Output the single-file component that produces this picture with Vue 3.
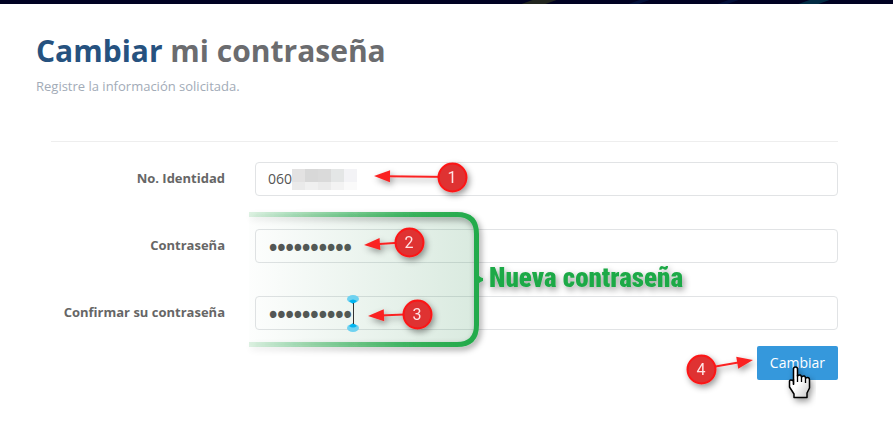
<script setup>

import { ref } from 'vue';

const identidad = ref('060');
const contrasena = ref('xxxxxxxxxx');
const confirmacion = ref('xxxxxxxxxx');

// pasos numerados: circulo (x, y) y punta de la flecha
const pasos = [
    { n: 1, x: 452, y: 177, px: 374, py: 176 },
    { n: 2, x: 409, y: 242, px: 364, py: 245 },
    { n: 3, x: 417, y: 314, px: 368, py: 316 },
    { n: 4, x: 701, y: 369, px: 753, py: 360 }
];

const flecha = (p) => {
    const angulo = Math.atan2(p.py - p.y, p.px - p.x) * 180 / Math.PI;
    return `translate(${p.px} ${p.py}) rotate(${angulo})`;
};

const largo = (p) => Math.hypot(p.px - p.x, p.py - p.y);

// celdas que ocultan el resto del numero
const celdas = [
    '#e3e2e2', '#d8d8d8', '#dadada', '#e4e6e6', '#f3f3f6',
    '#eaeaea', '#f0f0f0', '#ebebeb', '#f3f3f3', '#fafafa'
];

</script>

<template>

    <div class="pagina">

        <div class="barra">
            <i class="destello amarillo"></i>
            <i class="destello azul"></i>
            <i class="destello azul dos"></i>
            <i class="destello cian"></i>
        </div>

        <header class="encabezado">
            <h1><span>Cambiar</span> mi contraseña</h1>
            <p>Registre la información solicitada.</p>
        </header>

        <form class="formulario" @submit.prevent>

            <div class="fila">
                <label for="identidad">No. Identidad</label>
                <input id="identidad" v-model="identidad" type="text">
            </div>

            <div class="fila">
                <label for="contrasena">Contraseña</label>
                <input id="contrasena" v-model="contrasena" type="password">
            </div>

            <div class="fila">
                <label for="confirmacion">Confirmar su contraseña</label>
                <input id="confirmacion" v-model="confirmacion" type="password">
            </div>

            <div class="acciones">
                <button type="submit">Cambiar</button>
            </div>

        </form>

        <!-- anotaciones sobre el formulario -->
        <svg class="notas" width="893" height="427" viewBox="0 0 893 427">
            <defs>
                <linearGradient id="trazo" gradientUnits="userSpaceOnUse" x1="249" y1="0" x2="479" y2="0">
                    <stop offset="0" stop-color="#22aa4a" stop-opacity="0.15" />
                    <stop offset="0.75" stop-color="#22aa4a" stop-opacity="0.9" />
                    <stop offset="1" stop-color="#22aa4a" />
                </linearGradient>
                <linearGradient id="fondo">
                    <stop offset="0" stop-color="#2d8a4e" stop-opacity="0.01" />
                    <stop offset="1" stop-color="#2d8a4e" stop-opacity="0.18" />
                </linearGradient>
                <linearGradient id="mano" x1="0" y1="0" x2="1" y2="1">
                    <stop offset="0.5" stop-color="#fff" />
                    <stop offset="1" stop-color="#c4c4c4" />
                </linearGradient>
                <filter id="sombra" x="-30%" y="-30%" width="160%" height="180%">
                    <feDropShadow dx="2" dy="3" stdDeviation="3" flood-color="#000" flood-opacity="0.4" />
                </filter>
            </defs>

            <g>
                <rect v-for="(color, i) in celdas" :key="i" :x="292 + (i % 5) * 13" :y="i < 5 ? 169 : 182"
                    width="13" :height="i < 5 ? 13 : 8" :fill="color" />
            </g>

            <path d="M249 214H457Q477 214 477 234V325Q477 345 457 345H249Z" fill="url(#fondo)" />
            <g filter="url(#sombra)">
                <path d="M249 214.500H457Q476.500 214.500 476.500 234V325Q476.500 344.500 457 344.500H249"
                    fill="none" stroke="url(#trazo)" stroke-width="5" />
                <path d="M478 274Q479 277 483 278V281Q479 282 478 285Z" fill="#22aa4a" />
            </g>

            <g filter="url(#sombra)">
                <text class="titulo-nota" x="489" y="287">Nueva contraseña</text>
            </g>

            <g v-for="p in pasos" :key="p.n" filter="url(#sombra)">
                <g :transform="flecha(p)">
                    <path :d="`M-12 0H${-largo(p)}`" stroke="#fa2424" stroke-width="2" />
                    <path d="M0 0L-16 -6V6Z" fill="#fa2424" />
                </g>
                <circle :cx="p.x + 0.5" :cy="p.y + 0.5" r="14" fill="#df3033" stroke="#fc1414" stroke-width="2" />
                <text class="numero" :x="p.x" :y="p.y + 6">{{ p.n }}</text>
            </g>

            <!-- cursor de texto -->
            <g>
                <ellipse cx="353" cy="299" rx="6" ry="4" fill="#6fd2f0" />
                <ellipse cx="353" cy="328" rx="6" ry="4" fill="#6fd2f0" />
                <path d="M349 301Q353 298 357 301L353 304ZM349 326L353 323L357 326Q353 329 349 326Z" fill="#00b5f0" />
                <path d="M353.500 303V324" stroke="#333" />
            </g>

            <!-- puntero -->
            <path filter="url(#sombra)"
                d="M793.500 384V369Q793.500 367 795.500 367Q797.500 367 797.500 369V376Q801 373.500 801.500 377Q805 374.500 805.500 378Q809.500 376.500 809.500 380V388L807 393V397.500H794V394L789.500 387V381Q790 379 793.500 381Z"
                fill="url(#mano)" stroke="#000" stroke-width="1.500" stroke-linejoin="round" />
            <path d="M793.500 379V385M797.500 375V382M801.500 376V382M805.500 378V383" stroke="#000" stroke-width="1.300" />
        </svg>

    </div>

</template>

<style>
body {
    margin: 0;
    background: #fff;
}
</style>

<style scoped>
.pagina {
    position: relative;
    overflow: hidden;
    padding-bottom: 47px;
    font-family: "Open Sans", sans-serif;
    color: #666;
}

/* BARRA SUPERIOR */

.barra {
    position: relative;
    height: 4px;
    overflow: hidden;
    background: #000222;
}

.destello {
    position: absolute;
    left: 59%;
    width: 24px;
    height: 4px;
    transform: skewX(-70deg);
}

.amarillo {
    background: #22261f;
}

.azul {
    left: 71%;
    width: 10px;
    background: #03103a;
}

.azul.dos {
    left: 81%;
}

.cian {
    left: 90%;
    width: 20px;
    background: #022c44;
}

/* ENCABEZADO */

.encabezado {
    padding: 26px 36px 0;
}

.encabezado h1 {
    margin: 0;
    font-size: 30px;
    line-height: 42px;
    font-weight: 700;
    color: #6b6c6f;
}

.encabezado h1 span {
    color: #26527f;
}

.encabezado p {
    margin: 4px 0 0;
    font-size: 13px;
    line-height: 20px;
    color: #a2abb7;
}

/* FORMULARIO */

.formulario {
    display: flex;
    flex-direction: column;
    gap: 33px;
    margin: 45px 55px 0 51px;
    padding-top: 20px;
    border-top: 1px solid #eee;
}

.fila {
    display: grid;
    grid-template-columns: 174px 1fr;
    column-gap: 30px;
    align-items: center;
}

.fila label {
    padding-bottom: 2px;
    text-align: right;
    font-size: 13px;
    line-height: 20px;
    font-weight: 700;
}

.fila input {
    box-sizing: border-box;
    width: 100%;
    height: 34px;
    padding: 5px 12px 7px;
    border: 1px solid #e1e3e5;
    border-radius: 4px;
    outline: none;
    background: #fff;
    font-family: inherit;
    font-size: 14px;
    color: #555;
}

.fila input[type="password"] {
    padding: 0 13px;
    font-size: 22px;
    -webkit-text-stroke: 2px #555;
}

.acciones {
    display: flex;
    justify-content: flex-end;
    margin-top: -17px;
}

.acciones button {
    height: 34px;
    padding: 0 13px 2px;
    border: 0;
    border-radius: 2px;
    background: #3598dc;
    font-family: inherit;
    font-size: 14px;
    color: #fff;
    cursor: pointer;
}

/* ANOTACIONES */

.notas {
    position: absolute;
    top: 0;
    left: 0;
    pointer-events: none;
}

.titulo-nota {
    font-family: Impact, "Roboto Condensed", Roboto, sans-serif;
    font-size: 27px;
    font-weight: 900;
    fill: #1fa947;
}

.numero {
    font-family: Roboto, sans-serif;
    font-size: 16px;
    text-anchor: middle;
    fill: #ffe4e4;
}
</style>
